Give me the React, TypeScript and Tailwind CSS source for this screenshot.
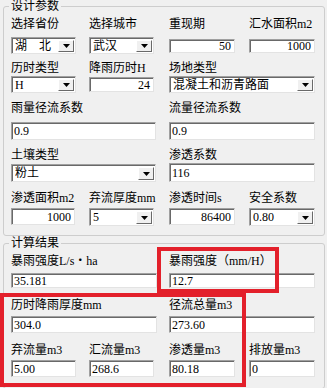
import React from 'react';

const font = "font-['Liberation_Serif','Noto_Sans_CJK_SC',serif]";

interface BoxProps {
  value: string;
  size: string;
  right?: boolean;
}

const TextBox: React.FC<BoxProps> = ({ value, size, right }) => {
  return (
    <div
      className={`${size} flex items-center bg-white border border-[#a0a0a0] border-r-[#e3e3e3] border-b-[#e3e3e3] shadow-[inset_1px_1px_0_#696969] text-[12px] leading-none overflow-hidden ${
        right ? 'justify-end pr-[3px]' : 'pl-[2px]'
      }`}
    >
      {value}
    </div>
  );
};

const Combo: React.FC<BoxProps> = ({ value, size }) => {
  return (
    <div
      className={`${size} flex items-stretch bg-white border border-[#a0a0a0] border-r-[#e3e3e3] border-b-[#e3e3e3] shadow-[inset_1px_1px_0_#696969] text-[12px] leading-none`}
    >
      <div className="flex-1 flex items-center pl-[3px] whitespace-nowrap">{value}</div>
      <div className="w-[16px] mt-[2px] mb-[1px] mr-[1px] flex items-center justify-center bg-[#f0f0f0] border border-t-white border-l-white border-r-[#696969] border-b-[#696969]">
        <svg width="7" height="4" viewBox="0 0 7 4">
          <polygon points="0,0 7,0 3.5,4" fill="#000" />
        </svg>
      </div>
    </div>
  );
};

interface FieldProps {
  label: string;
  gap: string;
  span?: boolean;
  children: React.ReactNode;
}

const Field: React.FC<FieldProps> = ({ label, gap, span, children }) => {
  return (
    <div className={`flex flex-col items-start ${span ? 'col-span-2' : ''}`}>
      <div className="h-[14px] leading-[14px] text-[12px] whitespace-nowrap">{label}</div>
      <div className={gap}>{children}</div>
    </div>
  );
};

const Row: React.FC<{ mt: string; children: React.ReactNode }> = ({ mt, children }) => {
  return <div className={`grid grid-cols-[78px_80px_80px_66px] pl-[7px] ${mt}`}>{children}</div>;
};

const Group: React.FC<{ title: string; mt: string; h: string; children: React.ReactNode }> = ({ title, mt, h, children }) => {
  return (
    <div className={`${mt} ${h} ml-[3px] w-[322px] border border-[#cdcdcd] rounded-[3px]`}>
      <div className="-mt-[8px] ml-[5px] px-[2px] w-fit h-[14px] leading-[14px] text-[12px] bg-[#f0f0f0]">{title}</div>
      {children}
    </div>
  );
};

export default function App() {
  return (
    <div className={`relative w-[327px] h-[388px] overflow-hidden bg-[#f0f0f0] text-black ${font}`}>
      <div className="h-px" />
      <Group title="设计参数" mt="mt-[5px]" h="h-[230px]">
        <Row mt="mt-[4px]">
          <Field label="选择省份" gap="mt-[6px]">
            <Combo value="湖　北" size="w-[65px] h-[17px]" />
          </Field>
          <Field label="选择城市" gap="mt-[6px]">
            <Combo value="武汉" size="w-[65px] h-[17px]" />
          </Field>
          <Field label="重现期" gap="mt-[8px]">
            <TextBox value="50" right size="w-[66px] h-[14px]" />
          </Field>
          <Field label="汇水面积m2" gap="mt-[8px]">
            <TextBox value="1000" right size="w-[66px] h-[14px]" />
          </Field>
        </Row>
        <Row mt="mt-[7px]">
          <Field label="历时类型" gap="mt-[1px]">
            <Combo value="H" size="w-[65px] h-[17px]" />
          </Field>
          <Field label="降雨历时H" gap="mt-[2px]">
            <TextBox value="24" right size="w-[65px] h-[15px]" />
          </Field>
          <Field label="场地类型" gap="mt-[1px]" span>
            <Combo value="混凝土和沥青路面" size="w-[146px] h-[17px]" />
          </Field>
        </Row>
        <Row mt="mt-[8px]">
          <Field label="雨量径流系数" gap="mt-[7px]" span>
            <TextBox value="0.9" size="w-[145px] h-[18px]" />
          </Field>
          <Field label="流量径流系数" gap="mt-[7px]" span>
            <TextBox value="0.9" size="w-[146px] h-[18px]" />
          </Field>
        </Row>
        <Row mt="mt-[8px]">
          <Field label="土壤类型" gap="mt-[2px]" span>
            <Combo value="粉土" size="w-[145px] h-[18px]" />
          </Field>
          <Field label="渗透系数" gap="mt-[1px]" span>
            <TextBox value="116" size="w-[146px] h-[19px]" />
          </Field>
        </Row>
        <Row mt="mt-[9px]">
          <Field label="渗透面积m2" gap="mt-[3px]">
            <TextBox value="1000" right size="w-[64px] h-[17px]" />
          </Field>
          <Field label="弃流厚度mm" gap="mt-[3px]">
            <Combo value="5" size="w-[65px] h-[18px]" />
          </Field>
          <Field label="渗透时间s" gap="mt-[3px]">
            <TextBox value="86400" right size="w-[66px] h-[17px]" />
          </Field>
          <Field label="安全系数" gap="mt-[3px]">
            <Combo value="0.80" size="w-[66px] h-[18px]" />
          </Field>
        </Row>
      </Group>

      <Group title="计算结果" mt="mt-[7px]" h="h-[146px]">
        <Row mt="mt-[4px]">
          <Field label="暴雨强度L/s・ha" gap="mt-[5px]" span>
            <TextBox value="35.181" size="w-[146px] h-[15px]" />
          </Field>
          <Field label="暴雨强度（mm/H）" gap="mt-[5px]" span>
            <TextBox value="12.7" size="w-[146px] h-[15px]" />
          </Field>
        </Row>
        <Row mt="mt-[10px]">
          <Field label="历时降雨厚度mm" gap="mt-[4px]" span>
            <TextBox value="304.0" size="w-[146px] h-[17px]" />
          </Field>
          <Field label="径流总量m3" gap="mt-[4px]" span>
            <TextBox value="273.60" size="w-[146px] h-[17px]" />
          </Field>
        </Row>
        <Row mt="mt-[10px]">
          <Field label="弃流量m3" gap="mt-[3px]">
            <TextBox value="5.00" size="w-[65px] h-[17px]" />
          </Field>
          <Field label="汇流量m3" gap="mt-[3px]">
            <TextBox value="268.6" size="w-[65px] h-[17px]" />
          </Field>
          <Field label="渗透量m3" gap="mt-[3px]">
            <TextBox value="80.18" size="w-[66px] h-[17px]" />
          </Field>
          <Field label="排放量m3" gap="mt-[3px]">
            <TextBox value="0" size="w-[66px] h-[17px]" />
          </Field>
        </Row>
      </Group>

      {/* red annotation frames drawn over the form */}
      <div className="absolute left-[157px] top-[247px] w-[122px] h-[46px] border-4 border-[#e3202b]" />
      <div className="absolute left-0 top-[293px] w-[246px] h-[94px] border-4 border-[#e3202b]" />
    </div>
  );
}
